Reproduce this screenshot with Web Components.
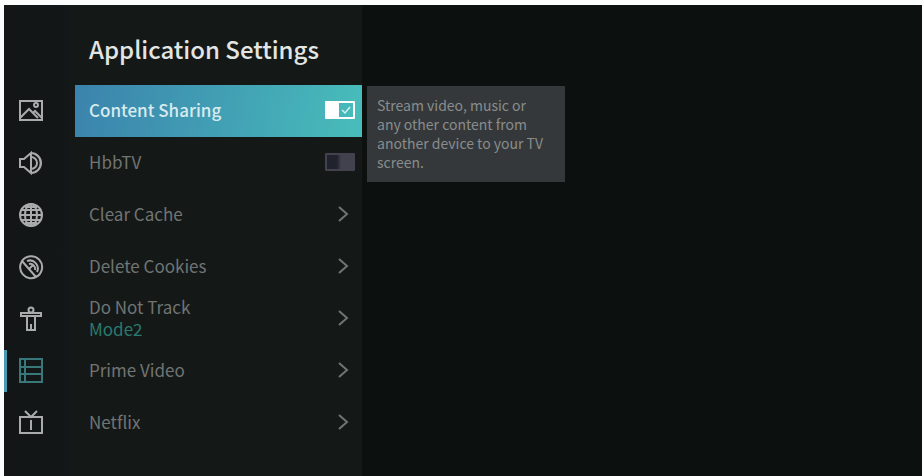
<!DOCTYPE html>
<html lang="en">
<head>
<meta charset="utf-8">
<meta name="viewport" content="width=device-width, initial-scale=1">
<title>Application Settings</title>
<style>
  :root {
    --color-screen: #0c110f;
    --color-rail: #121617;
    --color-panel: #141918;
    --color-text: #717473;
    --color-title: #e2e5e4;
    --color-accent: #2b7a6f;
    --color-tip: #34383a;
    --row-height: 52px;
  }

  body {
    margin: 0;
    background: #fbfdfc;
    color: var(--color-text);
    font-family: "Noto Sans CJK SC", "Noto Sans", sans-serif;
    font-size: 17px;
    line-height: 22px;
  }
</style>
</head>
<body>
<settings-screen>
  <rail-nav slot="rail">
    <rail-item label="Picture">
      <svg viewBox="0 0 26 26"><path d="M2 3h22v19H2zM2 20l9-9 9 9M15 15l2-2 7 7"/><circle cx="18" cy="7" r="2"/></svg>
    </rail-item>
    <rail-item label="Sound">
      <svg viewBox="0 0 26 26"><path d="M2 9h4l7-6v20l-7-6H2zM13 3a10 10 0 0 1 0 20M13 7a6 6 0 0 1 0 12M17 4a10 10 0 0 1 0 18"/></svg>
    </rail-item>
    <rail-item label="Network">
      <svg viewBox="0 0 26 26"><circle cx="13" cy="13" r="11"/><ellipse cx="13" cy="13" rx="6" ry="11"/><path d="M13 2v22M2 13h22M3 8h20M3 18h20M7 5h12M7 21h12"/></svg>
    </rail-item>
    <rail-item label="Channel">
      <svg viewBox="0 0 26 26"><path d="M4 7a11 11 0 1 1 14 16M4 7a11 11 0 0 0 14 16zM11 15l4-4M9 7a8 8 0 0 1 10 11M11 10a5 5 0 0 1 6 6"/></svg>
    </rail-item>
    <rail-item label="Accessibility">
      <svg viewBox="0 0 26 26"><circle cx="13" cy="4" r="2.5"/><path d="M3 7h20v3h-6v14H9V10H3zM13 18v6M9 10h8"/></svg>
    </rail-item>
    <rail-item label="System" active>
      <svg viewBox="0 0 26 26"><path d="M2 1h22v23H2zM7 1v23M2 9h22M2 16h22"/></svg>
    </rail-item>
    <rail-item label="Support">
      <svg viewBox="0 0 26 26"><path d="M2 7h22v16H2zM7 1l6 6 6-6M13 10v10"/></svg>
    </rail-item>
  </rail-nav>

  <settings-panel slot="panel" heading="Application Settings">
    <toggle-row active checked>Content Sharing</toggle-row>
    <toggle-row>HbbTV</toggle-row>
    <link-row>Clear Cache</link-row>
    <link-row>Delete Cookies</link-row>
    <link-row value="Mode2">Do Not Track</link-row>
    <link-row>Prime Video</link-row>
    <link-row>Netflix</link-row>
  </settings-panel>

  <help-tip slot="help">Stream video, music or any other content from another device to your TV screen.</help-tip>
</settings-screen>

<script>
/**
 * Settings screen: icon rail, option list and a help box for the focused option
 */
class SettingsScreen extends HTMLElement {
  constructor() {
    super();
    this.attachShadow({ mode: 'open' });
    this.shadowRoot.innerHTML = `
      <style>
        :host {
          display: grid;
          box-sizing: border-box;
          min-height: 100vh;
          padding: 5px 1px 0 4px;
        }

        .screen {
          display: grid;
          grid-template-columns: 71px 287px 1fr;
          background: var(--color-screen);
        }

        .rail {
          padding-top: 80px;
          background: linear-gradient(90deg, var(--color-rail) 80%, var(--color-panel));
        }

        .help {
          padding: 81px 16px 16px 5px;
        }
      </style>
      <main class="screen">
        <div class="rail"><slot name="rail"></slot></div>
        <slot name="panel"></slot>
        <div class="help"><slot name="help"></slot></div>
      </main>
    `;
  }
}

class RailNav extends HTMLElement {
  constructor() {
    super();
    this.attachShadow({ mode: 'open' });
    this.shadowRoot.innerHTML = `
      <style>
        :host {
          display: block;
        }

        nav {
          display: flex;
          flex-direction: column;
        }
      </style>
      <nav aria-label="Settings sections"><slot></slot></nav>
    `;
  }
}

class RailItem extends HTMLElement {
  constructor() {
    super();
    this.attachShadow({ mode: 'open' });
  }

  connectedCallback() {
    this.shadowRoot.innerHTML = `
      <style>
        :host {
          display: block;
          color: #a9acab;
        }

        :host([active]) {
          color: #38777a;
        }

        button {
          display: flex;
          align-items: center;
          gap: 11px;
          width: 100%;
          height: var(--row-height);
          padding: 0;
          border: 0;
          background: none;
          color: inherit;
          cursor: pointer;
        }

        .marker {
          width: 3px;
          height: 42px;
        }

        :host([active]) .marker {
          background: #4a9bb0;
        }

        ::slotted(svg) {
          width: 26px;
          height: 26px;
          fill: none;
          stroke: currentColor;
          stroke-width: 2;
        }
      </style>
      <button type="button" aria-label="${this.getAttribute('label')}">
        <span class="marker"></span>
        <slot></slot>
      </button>
    `;
  }
}

class SettingsPanel extends HTMLElement {
  constructor() {
    super();
    this.attachShadow({ mode: 'open' });
  }

  connectedCallback() {
    this.shadowRoot.innerHTML = `
      <style>
        :host {
          display: block;
          background: var(--color-panel);
        }

        h1 {
          box-sizing: border-box;
          height: 80px;
          margin: 0;
          padding: 28px 14px 0;
          color: var(--color-title);
          font-size: 24px;
          font-weight: 500;
          line-height: 32px;
          white-space: nowrap;
        }
      </style>
      <h1>${this.getAttribute('heading')}</h1>
      <slot></slot>
    `;
  }
}

// Box shared by both kinds of row
const rowStyles = `
  :host {
    display: block;
  }

  .row {
    box-sizing: border-box;
    display: flex;
    align-items: center;
    justify-content: space-between;
    width: 100%;
    height: var(--row-height);
    padding: 0 7px 2px 14px;
    border: 0;
    background: none;
    color: inherit;
    font: inherit;
    text-align: left;
    cursor: pointer;
  }
`;

class ToggleRow extends HTMLElement {
  constructor() {
    super();
    this.attachShadow({ mode: 'open' });
  }

  connectedCallback() {
    this.shadowRoot.innerHTML = `
      <style>
        ${rowStyles}

        :host([active]) {
          background: linear-gradient(100deg, #3b83ad, #42a2b4 55%, #48bdbb);
          color: #d7ebef;
          font-weight: 500;
        }

        .switch {
          display: grid;
          width: 30px;
          height: 18px;
        }

        input,
        svg {
          grid-area: 1 / 1;
          width: 30px;
          height: 18px;
          margin: 0;
        }

        input {
          appearance: none;
          box-sizing: border-box;
          border: 2px solid #41424e;
          border-radius: 1px;
          background: linear-gradient(90deg, #20222e 10px, #41424e 14px);
        }

        input:checked {
          border-color: #ffffff;
          background: linear-gradient(90deg, #ffffff 12px, transparent 12px);
        }

        svg {
          display: none;
          fill: none;
          stroke: #d5f0f0;
          stroke-width: 1.5;
          pointer-events: none;
        }

        input:checked + svg {
          display: block;
        }
      </style>
      <label class="row">
        <span><slot></slot></span>
        <span class="switch">
          <input type="checkbox" ${this.hasAttribute('checked') ? 'checked' : ''}>
          <svg viewBox="0 0 30 18" aria-hidden="true"><path d="M17 9l3 3 5-6"/></svg>
        </span>
      </label>
    `;
  }
}

class LinkRow extends HTMLElement {
  constructor() {
    super();
    this.attachShadow({ mode: 'open' });
  }

  connectedCallback() {
    const value = this.getAttribute('value');

    this.shadowRoot.innerHTML = `
      <style>
        ${rowStyles}

        .value {
          display: block;
          color: var(--color-accent);
        }

        svg {
          width: 24px;
          height: 18px;
          fill: none;
          stroke: currentColor;
          stroke-width: 2;
        }
      </style>
      <button type="button" class="row">
        <span>
          <slot></slot>
          ${value ? `<span class="value">${value}</span>` : ''}
        </span>
        <svg viewBox="0 0 24 18" aria-hidden="true"><path d="M8 2l8 7-8 7"/></svg>
      </button>
    `;
  }
}

class HelpTip extends HTMLElement {
  constructor() {
    super();
    this.attachShadow({ mode: 'open' });
    this.shadowRoot.innerHTML = `
      <style>
        :host {
          display: block;
          box-sizing: border-box;
          max-width: 198px;
          padding: 10px 14px 10px 10px;
          background: var(--color-tip);
          color: #898c8d;
          font-size: 14px;
          line-height: 19px;
        }
      </style>
      <slot></slot>
    `;
  }
}

customElements.define('settings-screen', SettingsScreen);
customElements.define('rail-nav', RailNav);
customElements.define('rail-item', RailItem);
customElements.define('settings-panel', SettingsPanel);
customElements.define('toggle-row', ToggleRow);
customElements.define('link-row', LinkRow);
customElements.define('help-tip', HelpTip);
</script>
</body>
</html>
